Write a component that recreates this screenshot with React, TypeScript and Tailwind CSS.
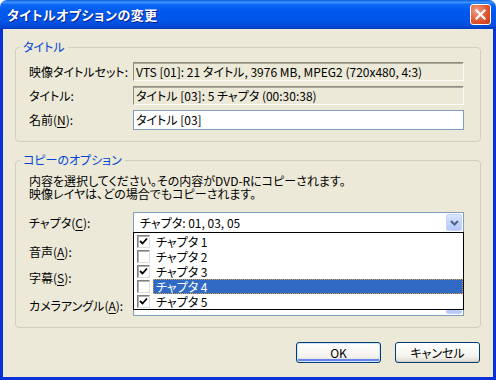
import React from 'react';

const jp = "font-['Noto_Sans_CJK_JP','Noto_Sans_CJK_SC',sans-serif] [font-feature-settings:'palt']";

type RowProps = {
  label: React.ReactNode;
  children: React.ReactNode;
  className?: string;
};

function Row({ label, children, className = '' }: RowProps) {
  return (
    <div className={`flex items-center ${className}`}>
      <div className="w-[104px] shrink-0 leading-[14px]">{label}</div>
      {children}
    </div>
  );
}

function ReadOnlyField({ text }: { text: string }) {
  return (
    <div className="w-[331px] h-[19px] flex items-center pl-[2px] bg-[#ece9d8] border border-t-[#8f8d80] border-l-[#8f8d80] border-r-[#fdfcf8] border-b-[#fdfcf8] shadow-[inset_0_1px_0_#aca899] whitespace-nowrap overflow-hidden leading-[14px]">
      {text}
    </div>
  );
}

function DropButton() {
  return (
    <div className="w-[16px] h-[17px] mr-[1px] rounded-[2px] border border-[#c3d3fd] bg-[linear-gradient(to_bottom,#dbe6fe,#c1d3fb_60%,#b4c8f8)] flex items-center justify-center">
      <svg width="9" height="6" viewBox="0 0 9 6">
        <polyline points="1,1 4.5,4.5 8,1" fill="none" stroke="#4d6185" strokeWidth="2" />
      </svg>
    </div>
  );
}

function Combo({ text = '', children }: { text?: string; children?: React.ReactNode }) {
  return (
    <div className="relative w-[331px] h-[21px] border border-[#7f9db9] bg-white flex items-center justify-between">
      <span className="pl-[6px] leading-[14px] whitespace-nowrap">{text}</span>
      <DropButton />
      {children}
    </div>
  );
}

function CheckBox({ checked }: { checked: boolean }) {
  return (
    <div className="w-[13px] h-[13px] shrink-0 bg-white border border-t-[#808080] border-l-[#808080] border-r-[#dcdcdc] border-b-[#dcdcdc] shadow-[inset_1px_1px_0_#b0b0b0] flex items-center justify-center">
      {checked && (
        <svg width="9" height="9" viewBox="0 0 9 9">
          <polyline points="1,4 3.5,6.5 8,1.5" fill="none" stroke="#000" strokeWidth="1.8" />
        </svg>
      )}
    </div>
  );
}

const chapters = [
  { name: 'チャプタ 1', checked: true },
  { name: 'チャプタ 2', checked: false },
  { name: 'チャプタ 3', checked: true },
  { name: 'チャプタ 4', checked: false, selected: true },
  { name: 'チャプタ 5', checked: true },
];

function Mn({ children }: { children: string }) {
  return <span className="underline underline-offset-2">{children}</span>;
}

function XpButton({ children, primary }: { children: React.ReactNode; primary?: boolean }) {
  return (
    <button
      className={`w-[85px] h-[21px] rounded-[3px] border border-[#003c74] bg-[linear-gradient(to_bottom,#ffffff,#f4f3ee_70%,#dcd8cb)] leading-[14px] ${
        primary ? 'shadow-[inset_0_0_0_1px_#cee7ff,inset_0_-2px_0_1px_#6982ee]' : 'shadow-[inset_0_-1px_0_#d6d0c5]'
      }`}
    >
      {children}
    </button>
  );
}

export default function App() {
  return (
    <div className={`w-[496px] h-[380px] flex flex-col text-[12px] text-black ${jp}`}>
      {/* title bar */}
      <div className="h-[29px] shrink-0 rounded-t-[7px] bg-[linear-gradient(to_bottom,#0a5ddb_0%,#3d94fe_8%,#0b67f6_16%,#0058ee_40%,#0055e8_70%,#0049d9_90%,#003cbc_100%)] flex items-center justify-between pl-[7px] pr-[5px]">
        <span className="text-white font-bold text-[13px] leading-[16px] [text-shadow:1px_1px_0_#0a1e8c] tracking-[0.5px]">
          タイトルオプションの変更
        </span>
        <div className="w-[21px] h-[21px] rounded-[3px] border border-white bg-[radial-gradient(circle_at_30%_30%,#f0a08a,#e2572f_55%,#c2391a)] flex items-center justify-center">
          <svg width="11" height="11" viewBox="0 0 11 11">
            <path d="M1.5 1.5 L9.5 9.5 M9.5 1.5 L1.5 9.5" stroke="#fff" strokeWidth="2.2" strokeLinecap="square" />
          </svg>
        </div>
      </div>

      {/* body */}
      <div className="flex-1 flex flex-col bg-[#ece9d8] border-x-[3px] border-b-[3px] border-x-[#0831d9] border-b-[#0831d9] px-[12px] pt-[11px]">
        <fieldset className="border border-[#d0d0bf] rounded-[4px] p-0">
          <legend className="ml-[4px] px-[3px] text-[#0046d5] leading-[14px]">タイトル</legend>
          <div className="pt-[8px] pb-[11px] pl-[13px] pr-[16px] flex flex-col">
            <Row label="映像タイトルセット:">
              <ReadOnlyField text="VTS [01]:  21 タイトル, 3976 MB, MPEG2 (720x480, 4:3)" />
            </Row>
            <Row label="タイトル:" className="mt-[5px]">
              <ReadOnlyField text="タイトル [03]: 5 チャプタ (00:30:38)" />
            </Row>
            <Row
              label={
                <>
                  名前(<Mn>N</Mn>):
                </>
              }
              className="mt-[5px]"
            >
              <div className="w-[331px] h-[20px] border border-[#7f9db9] bg-white flex items-center pl-[2px] leading-[14px]">
                タイトル [03]
              </div>
            </Row>
          </div>
        </fieldset>

        <fieldset className="mt-[11px] border border-[#d0d0bf] rounded-[4px] p-0">
          <legend className="ml-[4px] px-[3px] text-[#0046d5] leading-[14px]">コピーのオプション</legend>
          <div className="pt-[7px] pb-[11px] pl-[13px] pr-[16px] flex flex-col">
            <p className="leading-[13px]">内容を選択してください。その内容がDVD-Rにコピーされます。</p>
            <p className="leading-[13px]">映像レイヤは、どの場合でもコピーされます。</p>

            <Row
              className="mt-[12px] relative z-10"
              label={
                <>
                  チャプタ(<Mn>C</Mn>):
                </>
              }
            >
              <Combo text="チャプタ: 01, 03, 05">
                <div className="absolute left-[-1px] top-[19px] w-[331px] h-[78px] border border-black bg-white pt-[1px]">
                  {chapters.map((c) => (
                    <div key={c.name} className="h-[15px] flex items-center pl-[3px]">
                      <CheckBox checked={c.checked} />
                      <div
                        className={`ml-[3px] flex-1 h-[15px] flex items-center pl-[3px] leading-[14px] ${
                          c.selected ? 'bg-[#316ac5] text-white outline outline-1 outline-dotted outline-[#d8a040] -outline-offset-1' : ''
                        }`}
                      >
                        {c.name}
                      </div>
                    </div>
                  ))}
                </div>
              </Combo>
            </Row>
            <Row
              className="mt-[8px]"
              label={
                <>
                  音声(<Mn>A</Mn>):
                </>
              }
            >
              <Combo />
            </Row>
            <Row
              className="mt-[5px]"
              label={
                <>
                  字幕(<Mn>S</Mn>):
                </>
              }
            >
              <Combo />
            </Row>
            <Row
              className="mt-[7px]"
              label={
                <>
                  カメラアングル(<Mn>A</Mn>):
                </>
              }
            >
              <Combo />
            </Row>
          </div>
        </fieldset>

        <div className="mt-[14px] mr-[1px] flex justify-end gap-[14px]">
          <XpButton primary>OK</XpButton>
          <XpButton>キャンセル</XpButton>
        </div>
      </div>
    </div>
  );
}
